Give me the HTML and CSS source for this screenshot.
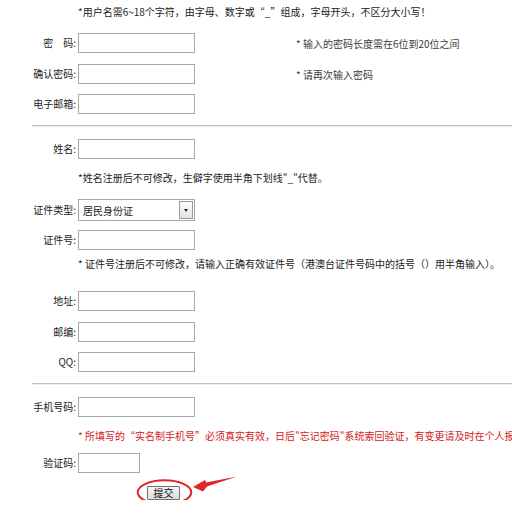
FILE: index.html
```html
<!DOCTYPE html>
<html lang="zh-CN">

<head>
	<meta charset="UTF-8">
	<meta name="viewport" content="width=device-width, initial-scale=1.0">
	<title>用户注册</title>
	<link rel="stylesheet" href="styles.css">
</head>

<body>
	<form class="reg-form">
		<p class="note note-top">*用户名需6~18个字符，由字母、数字或“_”组成，字母开头，不区分大小写！</p>

		<div class="row">
			<label>密　码:</label>
			<input type="password" class="field">
			<span class="hint">* 输入的密码长度需在6位到20位之间</span>
		</div>
		<div class="row">
			<label>确认密码:</label>
			<input type="password" class="field">
			<span class="hint">* 请再次输入密码</span>
		</div>
		<div class="row gap-10">
			<label>电子邮箱:</label>
			<input type="text" class="field">
		</div>

		<div class="divider"></div>

		<div class="row gap-12">
			<label>姓名:</label>
			<input type="text" class="field">
		</div>
		<p class="note">*姓名注册后不可修改，生僻字使用半角下划线"_"代替。</p>
		<div class="row row-select">
			<label>证件类型:</label>
			<div class="select">
				<span class="select-text">居民身份证</span>
				<span class="select-btn"></span>
			</div>
		</div>
		<div class="row gap-9">
			<label>证件号:</label>
			<input type="text" class="field">
		</div>
		<p class="note gap-4">* 证件号注册后不可修改，请输入正确有效证件号（港澳台证件号码中的括号（）用半角输入）。</p>

		<div class="row gap-17">
			<label>地址:</label>
			<input type="text" class="field">
		</div>
		<div class="row">
			<label>邮编:</label>
			<input type="text" class="field">
		</div>
		<div class="row gap-10">
			<label>QQ:</label>
			<input type="text" class="field">
		</div>

		<div class="divider"></div>

		<div class="row gap-12">
			<label>手机号码:</label>
			<input type="text" class="field">
		</div>
		<p class="note note-red">* 所填写的“实名制手机号”必须真实有效，日后"忘记密码"系统索回验证，有变更请及时在个人报考</p>
		<div class="row gap-7">
			<label>验证码:</label>
			<input type="text" class="field field-short">
		</div>

		<div class="submit-row">
			<button type="button" class="btn-submit">提交</button>
			<!-- red annotation: circle + arrow -->
			<svg class="mark" width="115" height="34" viewBox="0 0 115 34">
				<ellipse cx="34.5" cy="18.3" rx="26.8" ry="12" fill="none" stroke="#e0262a" stroke-width="2" />
				<polygon points="63,13 75,6 76,8.6 107,2.5 77,12.4 73,17.5" fill="#e0262a" />
			</svg>
		</div>
	</form>
</body>

</html>
```

FILE: styles.css
```css
:root {
	--text: #222;
	--hint: #3a3a3a;
	--border: #a8a8a8;
	--red: #d42020;
}

* {
	box-sizing: border-box;
}

html,
body {
	overflow: hidden;
}

body {
	margin: 0;
	background: #fff;
	color: var(--text);
	font-family: "Noto Sans CJK SC", "Liberation Sans", sans-serif;
	font-size: 10px;
}

.reg-form {
	padding-top: 2px;
	width: 512px;
}

.note {
	margin: 9px 0 0;
	padding-left: 78px;
	height: 20px;
	line-height: 20px;
	white-space: nowrap;
}

.note-top {
	margin-top: 0;
}

.note-red {
	color: var(--red);
	overflow: hidden;
}

.row {
	display: grid;
	grid-template-columns: 78px 218px auto;
	align-items: center;
	height: 20px;
	margin-top: 11px;
	white-space: nowrap;
}

.row label {
	text-align: right;
	padding-right: 2px;
	line-height: 20px;
}

.hint {
	color: var(--hint);
}

.field {
	width: 117px;
	height: 20px;
	margin: 0;
	padding: 0 3px;
	border: 1px solid var(--border);
	font: inherit;
}

.field-short {
	width: 62px;
}

/* fake select box */
.row-select {
	height: 22px;
}

.select {
	display: flex;
	align-items: center;
	justify-content: space-between;
	width: 117px;
	height: 22px;
	padding: 0 1px 0 4px;
	border: 1px solid var(--border);
}

.select-btn {
	display: flex;
	align-items: center;
	justify-content: center;
	width: 14px;
	height: 18px;
	border: 1px solid #9a9a9a;
	background: linear-gradient(#fbfbfb, #e3e3e3);
}

.select-btn::after {
	content: "";
	border-style: solid;
	border-width: 3px 2.5px 0 2.5px;
	border-color: #222 transparent transparent transparent;
}

.divider {
	margin: 11px 0 0 32px;
	height: 2px;
	border-top: 1px solid #c4c4c4;
	border-bottom: 1px solid #ececec;
}

.gap-4 {
	margin-top: 4px;
}

.gap-7 {
	margin-top: 7px;
}

.gap-9 {
	margin-top: 9px;
}

.gap-10 {
	margin-top: 10px;
}

.gap-12 {
	margin-top: 12px;
}

.gap-17 {
	margin-top: 17px;
}

.submit-row {
	position: relative;
	margin-top: 13px;
	padding-left: 147px;
	height: 14px;
}

.btn-submit {
	display: block;
	width: 33px;
	height: 14px;
	padding: 0;
	border: 1px solid #707070;
	border-radius: 1px;
	background: linear-gradient(#f6f6f6, #dcdcdc);
	color: #111;
	font: inherit;
	line-height: 12px;
}

.mark {
	position: absolute;
	left: 130px;
	top: -12px;
}
```
